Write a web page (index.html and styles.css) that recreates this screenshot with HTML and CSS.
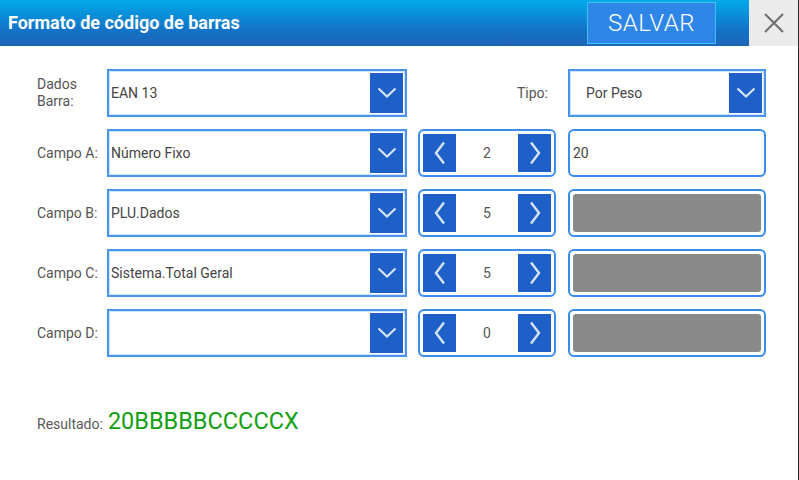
FILE: index.html
```html
<!DOCTYPE html>
<html>
<head>
<meta charset="utf-8">
<link rel="stylesheet" href="styles.css">
</head>
<body>
<div class="app">
  <header class="topbar">
    <h1 class="title">Formato de código de barras</h1>
    <button class="save">SALVAR</button>
    <div class="close">
      <svg width="20" height="20" viewBox="0 0 20 20"><path d="M1 1 L19 19 M19 1 L1 19" stroke="#6e6e6e" stroke-width="2" fill="none"/></svg>
    </div>
  </header>
  <main class="form">
    <div class="label">Dados<br>Barra:</div>
    <div class="select"><span class="val">EAN 13</span><span class="drop"><svg width="20" height="12" viewBox="0 0 20 12"><path d="M1.5 1.5 L10 9.5 L18.5 1.5" stroke="#d6e4f7" stroke-width="2.2" fill="none"/></svg></span></div>
    <div class="label right">Tipo:</div>
    <div class="select tipo"><span class="val">Por Peso</span><span class="drop"><svg width="20" height="12" viewBox="0 0 20 12"><path d="M1.5 1.5 L10 9.5 L18.5 1.5" stroke="#d6e4f7" stroke-width="2.2" fill="none"/></svg></span></div>

    <div class="label">Campo A:</div>
    <div class="select"><span class="val">Número Fixo</span><span class="drop"><svg width="20" height="12" viewBox="0 0 20 12"><path d="M1.5 1.5 L10 9.5 L18.5 1.5" stroke="#d6e4f7" stroke-width="2.2" fill="none"/></svg></span></div>
    <div class="stepper"><span class="arrow"><svg width="12" height="24" viewBox="0 0 12 24"><path d="M10 1.5 L2 12 L10 22.5" stroke="#d6e4f7" stroke-width="2.4" fill="none"/></svg></span><span class="num">2</span><span class="arrow"><svg width="12" height="24" viewBox="0 0 12 24"><path d="M2 1.5 L10 12 L2 22.5" stroke="#d6e4f7" stroke-width="2.4" fill="none"/></svg></span></div>
    <div class="field"><span class="val">20</span></div>

    <div class="label">Campo B:</div>
    <div class="select"><span class="val">PLU.Dados</span><span class="drop"><svg width="20" height="12" viewBox="0 0 20 12"><path d="M1.5 1.5 L10 9.5 L18.5 1.5" stroke="#d6e4f7" stroke-width="2.2" fill="none"/></svg></span></div>
    <div class="stepper"><span class="arrow"><svg width="12" height="24" viewBox="0 0 12 24"><path d="M10 1.5 L2 12 L10 22.5" stroke="#d6e4f7" stroke-width="2.4" fill="none"/></svg></span><span class="num">5</span><span class="arrow"><svg width="12" height="24" viewBox="0 0 12 24"><path d="M2 1.5 L10 12 L2 22.5" stroke="#d6e4f7" stroke-width="2.4" fill="none"/></svg></span></div>
    <div class="field"><span class="fill"></span></div>

    <div class="label">Campo C:</div>
    <div class="select"><span class="val">Sistema.Total Geral</span><span class="drop"><svg width="20" height="12" viewBox="0 0 20 12"><path d="M1.5 1.5 L10 9.5 L18.5 1.5" stroke="#d6e4f7" stroke-width="2.2" fill="none"/></svg></span></div>
    <div class="stepper"><span class="arrow"><svg width="12" height="24" viewBox="0 0 12 24"><path d="M10 1.5 L2 12 L10 22.5" stroke="#d6e4f7" stroke-width="2.4" fill="none"/></svg></span><span class="num">5</span><span class="arrow"><svg width="12" height="24" viewBox="0 0 12 24"><path d="M2 1.5 L10 12 L2 22.5" stroke="#d6e4f7" stroke-width="2.4" fill="none"/></svg></span></div>
    <div class="field"><span class="fill"></span></div>

    <div class="label">Campo D:</div>
    <div class="select"><span class="val"></span><span class="drop"><svg width="20" height="12" viewBox="0 0 20 12"><path d="M1.5 1.5 L10 9.5 L18.5 1.5" stroke="#d6e4f7" stroke-width="2.2" fill="none"/></svg></span></div>
    <div class="stepper"><span class="arrow"><svg width="12" height="24" viewBox="0 0 12 24"><path d="M10 1.5 L2 12 L10 22.5" stroke="#d6e4f7" stroke-width="2.4" fill="none"/></svg></span><span class="num">0</span><span class="arrow"><svg width="12" height="24" viewBox="0 0 12 24"><path d="M2 1.5 L10 12 L2 22.5" stroke="#d6e4f7" stroke-width="2.4" fill="none"/></svg></span></div>
    <div class="field"><span class="fill"></span></div>
  </main>
  <div class="result">
    <span class="rlabel">Resultado:</span>
    <span class="rvalue">20BBBBBCCCCCX</span>
  </div>
</div>
</body>
</html>
```

FILE: styles.css
```css
* { box-sizing: border-box; }
html, body { margin: 0; padding: 0; }
body {
  width: 799px;
  height: 480px;
  overflow: hidden;
  background: #fff;
  font-family: Roboto, "Liberation Sans", sans-serif;
}
.app {
  width: 799px;
  height: 480px;
  border-right: 1px solid #2a2a2a;
}
.topbar {
  height: 46px;
  display: flex;
  align-items: stretch;
  background: linear-gradient(to bottom, #02a9e9 0%, #1373c8 65%, #1f64b6 100%);
}
.title {
  margin: 0;
  flex: 1;
  padding-left: 8px;
  font-size: 18px;
  font-weight: 700;
  color: #fff;
  line-height: 46px;
}
.save {
  margin: 2px 33px 2px 0;
  width: 129px;
  background: #2e86e9;
  border: 1.5px solid #3ec3f3;
  color: #fff;
  font-family: Roboto, "Liberation Sans", sans-serif;
  font-weight: 300;
  font-size: 24px;
  letter-spacing: 0.5px;
  padding: 0;
}
.close {
  width: 49px;
  background: #ebebeb;
  display: flex;
  align-items: center;
  justify-content: center;
}
.form {
  display: grid;
  grid-template-columns: 70px 300px 161px 198px;
  grid-auto-rows: 48px;
  row-gap: 12px;
  padding: 23px 0 0 37px;
  align-items: center;
}
.label {
  font-size: 14px;
  color: #555;
  line-height: 17px;
}
.label.right {
  text-align: right;
  padding-right: 20px;
}
.select {
  height: 48px;
  border: 2px solid #4a94ec;
  box-shadow: inset 0 0 0 1px #cfe3fb;
  display: flex;
  align-items: center;
  padding: 2px;
}
.select .val {
  flex: 1;
  font-size: 14px;
  color: #444;
  padding-left: 0;
}
.select.tipo .val { padding-left: 14px; }
.drop {
  width: 33px;
  height: 40px;
  background: #1f60c8;
  display: flex;
  align-items: center;
  justify-content: center;
}
.stepper {
  margin-left: 11px;
  width: 138px;
  height: 48px;
  border: 2px solid #3a8cec;
  border-radius: 6px;
  display: flex;
  align-items: center;
  padding: 3px;
}
.arrow {
  width: 33px;
  height: 38px;
  background: #1f60c8;
  display: flex;
  align-items: center;
  justify-content: center;
}
.num {
  flex: 1;
  text-align: center;
  font-size: 14px;
  color: #555;
}
.field {
  height: 48px;
  border: 2px solid #3a8cec;
  border-radius: 6px;
  display: flex;
  align-items: center;
  padding: 3px;
}
.field .val {
  font-size: 14px;
  color: #444;
  padding-left: 0;
}
.fill {
  flex: 1;
  height: 38px;
  background: #898989;
  border-radius: 3px;
}
.result {
  display: flex;
  align-items: baseline;
  padding: 50px 0 0 37px;
}
.rlabel {
  font-size: 14px;
  color: #5a5a5a;
  margin-right: 5px;
}
.rvalue {
  font-size: 23.5px;
  color: #13a013;
}
```
